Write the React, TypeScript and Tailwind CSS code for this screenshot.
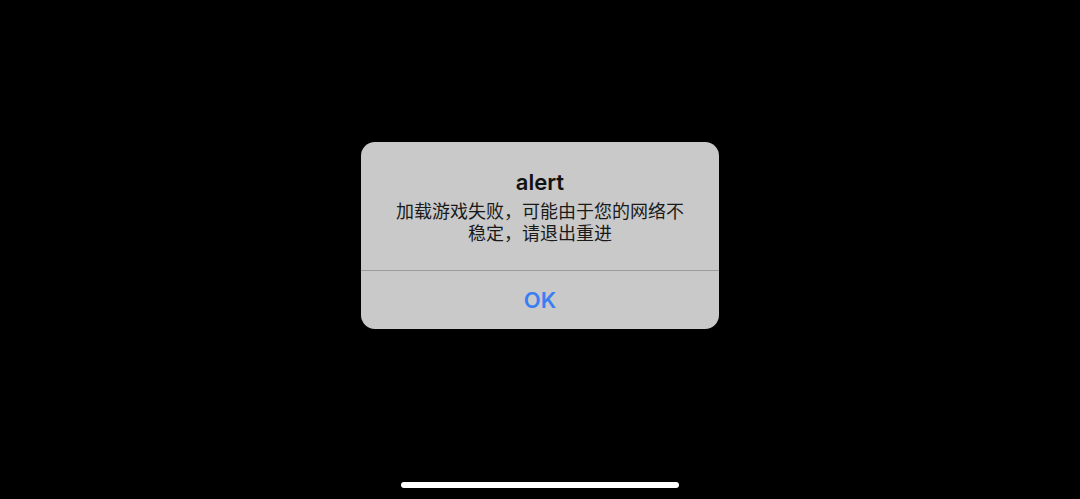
export default function App() {
  return (
    <div
      className="h-screen w-full bg-black flex flex-col items-center overflow-hidden"
      style={{ fontFamily: 'Inter, "Noto Sans CJK SC", sans-serif' }}
    >
      {/* alert */}
      <div className="mt-[142px] w-[358px] rounded-[14px] bg-[#c9c9c9] flex flex-col">
        <div className="px-[30px] pt-[27px] pb-[25px] flex flex-col items-center text-center">
          <h1 className="text-[22px] leading-[26px] font-semibold text-[#111]">alert</h1>
          <p className="mt-[6px] text-[18px] leading-[22px] text-[#1a1a1a]">
            加载游戏失败，可能由于您的网络不稳定，请退出重进
          </p>
        </div>
        <div className="h-px bg-[#9c9c9c]" />
        <button className="h-[58px] flex items-center justify-center text-[22px] font-semibold text-[#3a7ef3]">
          OK
        </button>
      </div>

      {/* home indicator */}
      <div className="mt-auto mb-[11px] w-[278px] h-[6px] rounded-full bg-white" />
    </div>
  );
}
